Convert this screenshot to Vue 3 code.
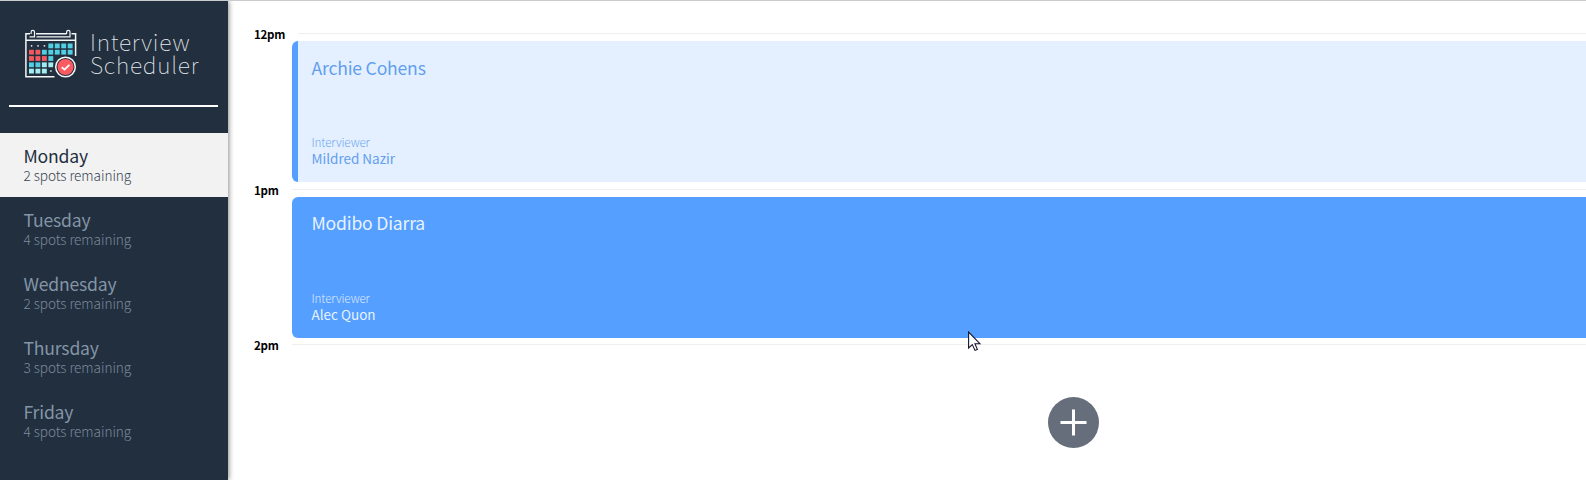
<script setup>
const days = [
  { name: 'Monday', spots: 2, selected: true },
  { name: 'Tuesday', spots: 4 },
  { name: 'Wednesday', spots: 2 },
  { name: 'Thursday', spots: 3 },
  { name: 'Friday', spots: 4 },
]

const appointments = [
  { time: '12pm', student: 'Archie Cohens', interviewer: 'Mildred Nazir', past: true },
  { time: '1pm', student: 'Modibo Diarra', interviewer: 'Alec Quon' },
]

// Calendar logo cells, one string per row: d = dot, c = cyan, r = red, p = pale, space = empty
const colors = { c: '#52cfe3', r: '#f2595f', p: '#a2edf0' }
const rows = ['dddcccc', 'rrccccc', 'rrrc   ', 'ccpp   ', 'pppd   ']
const cells = rows.flatMap((row, y) =>
  [...row].map((kind, x) => ({ kind, x: 29 + x * 6.45, y: 43.5 + y * 6.3 })).filter((c) => c.kind !== ' ')
)
</script>

<template>
  <main class="layout">
    <aside class="sidebar">
      <header class="brand">
        <svg class="logo" width="56" height="52" viewBox="23 28 56 52" aria-hidden="true">
          <g fill="none" stroke="#f3f6f8" stroke-width="1.5">
            <path d="M30 33.8H25.9V76.7H54.5M36 33.8H66.5M71.5 33.8H75.6V56M26 40.2H75.6" />
            <path d="M29.5 36.8H34.5V32a1.7 1.7 0 0 0-3.4 0V34M36.5 36.8H70V32a1.7 1.7 0 0 0-3.4 0V34" stroke-width="1.2" />
          </g>
          <template v-for="(c, i) in cells" :key="i">
            <rect v-if="c.kind === 'd'" :x="c.x + 1.8" :y="c.y + 1.6" width="1.5" height="1.5" fill="#e8eef2" />
            <rect v-else :x="c.x" :y="c.y" width="4.9" height="4.8" :fill="colors[c.kind]" />
          </template>
          <circle cx="65.5" cy="67" r="12" fill="#222f3e" />
          <circle cx="65.5" cy="67" r="9.8" fill="#222f3e" stroke="#f3f6f8" stroke-width="1.5" />
          <circle cx="65.5" cy="67" r="8" fill="#f95b60" />
          <path d="M61.8 67.3L64.5 69.6L69.4 64.8" fill="none" stroke="#fff" stroke-width="1.8" />
        </svg>
        <div class="title"><span>Interview</span><span>Scheduler</span></div>
      </header>
      <hr class="rule" />
      <ul class="days">
        <li v-for="day in days" :key="day.name" class="day" :class="{ selected: day.selected }">
          <h2>{{ day.name }}</h2>
          <p>{{ day.spots }} spots remaining</p>
        </li>
      </ul>
    </aside>

    <section class="schedule">
      <article v-for="a in appointments" :key="a.time" class="slot">
        <header class="hour"><h4>{{ a.time }}</h4><hr /></header>
        <div class="card" :class="{ past: a.past }">
          <h2>{{ a.student }}</h2>
          <div>
            <h5>Interviewer</h5>
            <h3>{{ a.interviewer }}</h3>
          </div>
        </div>
      </article>
      <article class="slot">
        <header class="hour"><h4>2pm</h4><hr /></header>
        <div class="empty">
          <svg width="51" height="51" viewBox="0 0 51 51" role="img" aria-label="Add">
            <circle cx="25.5" cy="25.5" r="25.5" fill="#656e7a" />
            <path d="M25.5 12.5V38.5M12.5 25.5H38.5" stroke="#fff" stroke-width="3" />
          </svg>
        </div>
      </article>
      <svg class="cursor" width="14" height="21" viewBox="0 0 14 21" aria-hidden="true">
        <path d="M.6 1V17L4.3 13.6L7 19.4L9.4 18.4L6.9 12.7H11.9Z" fill="#fff" stroke="#15152a" stroke-width="1.1" />
      </svg>
    </section>
  </main>
</template>

<style>
body { margin: 0; overflow: hidden; background: #fff; }
</style>

<style scoped>
* { box-sizing: border-box; }
h2, h3, h4, h5, p, ul { margin: 0; padding: 0; font-weight: 400; }
.layout {
  display: flex;
  height: 480px;
  overflow: hidden;
  border-top: 1px solid #c9cbcd;
  font-family: "Noto Sans CJK JP", "Noto Sans", sans-serif;
}
.sidebar {
  position: relative;
  z-index: 1;
  flex: none;
  width: 228px;
  background: #222f3e;
  box-shadow: 1px 0 5px rgba(0, 0, 0, 0.45);
}
.brand { display: flex; height: 104px; padding: 27px 0 0 23px; }
.logo { flex: none; }
.title {
  display: flex;
  flex-direction: column;
  margin: 2px 0 0 11px;
  color: #e6ebef;
  font-size: 23px;
  font-weight: 100;
  line-height: 23px;
  letter-spacing: 0.75px;
}
.rule { width: 209px; height: 2px; margin: 0 0 0 9px; border: 0; background: #fff; }
.days { margin-top: 26px; list-style: none; }
.day { height: 64px; padding: 11px 0 0 23.5px; color: #8395a7; }
.day h2 { font-size: 17.6px; line-height: 24px; letter-spacing: -0.2px; }
.day p { font-size: 13.6px; font-weight: 300; line-height: 15px; letter-spacing: -0.05px; opacity: 0.9; }
.day.selected { background: #f2f2f2; color: #222f3e; }
.schedule { position: relative; flex: none; width: 1626px; padding: 24px 0 0 26px; }
.slot { height: 155px; }
.slot:first-child { height: 156px; }
.hour { display: flex; height: 16px; }
.hour h4 { width: 38px; font-size: 11.5px; font-weight: 700; line-height: 18px; letter-spacing: -0.25px; color: #000; }
.hour hr { flex: 1; height: 1px; margin: 8px 0 0; border: 0; background: #eeefef; }
.slot:first-child hr { margin-left: 6px; }
.card {
  display: flex;
  flex-direction: column;
  justify-content: space-between;
  height: 141px;
  margin: 0 0 0 38px;
  padding: 13px 0 15px 19.5px;
  border-radius: 6px 0 0 6px;
  background: #549fff;
  color: #e8f2ff;
}
.card.past { padding-top: 14px; padding-left: 13.5px; border-left: 6px solid #549fff; background: #e4f0ff; color: #629ef0; }
.card h2 { font-size: 17.6px; line-height: 26px; letter-spacing: -0.2px; }
.card h5 { font-size: 11.6px; font-weight: 300; line-height: 15px; letter-spacing: -0.08px; opacity: 0.9; }
.card h3 { font-size: 13.5px; line-height: 17px; }
.empty { display: flex; align-items: center; justify-content: center; height: 141px; margin-left: 38px; }
.cursor { position: absolute; left: 740px; top: 330px; }
</style>
